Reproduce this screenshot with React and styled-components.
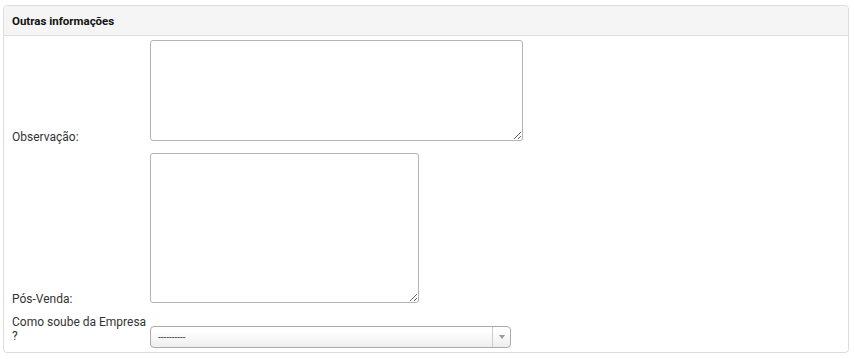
import React from 'react'
import styled, { createGlobalStyle } from 'styled-components'

const GlobalStyle = createGlobalStyle`
	body {
		margin: 0;
		font-family: Roboto, 'Liberation Sans', Arial, sans-serif;
		color: #333;
		background: #fff;
	}
`
const Panel = styled.section`
	margin: 5px 5px 0 3px;
	border: 1px solid #ddd;
	border-radius: 4px;
	background: #fff;
`
const Header = styled.div`
	height: 29px;
	padding: 0 8px;
	display: flex;
	align-items: center;
	background: #f5f5f5;
	border-bottom: 1px solid #ddd;
	border-radius: 3px 3px 0 0;
	font-size: 11.5px;
	font-weight: bold;
	color: #111;
`
const Body = styled.div`
	display: flex;
	flex-direction: column;
	gap: 12px;
	padding: 4px 8px 5px;
`
const Row = styled.div`
	display: flex;
	align-items: flex-end;
`
const Label = styled.label`
	width: 136px;
	flex: none;
	padding-right: 2px;
	font-size: 12px;
	line-height: 14px;
	margin-bottom: ${(p) => p.$drop || 0}px;
`
const TextArea = styled.textarea`
	display: block;
	box-sizing: border-box;
	width: ${(p) => p.$w}px;
	height: ${(p) => p.$h}px;
	margin: 0;
	border: 1px solid #b3b3b3;
	border-radius: 3px;
	font: inherit;
	font-size: 12px;
	resize: both;
	outline: none;
`
const Select = styled.div`
	box-sizing: border-box;
	width: 361px;
	height: 22px;
	margin-bottom: -1px;
	display: flex;
	align-items: stretch;
	border: 1px solid #aaa;
	border-radius: 4px;
	background: linear-gradient(#fff 20%, #eee 100%);
	font-size: 10px;
	color: #444;
`
const SelectValue = styled.span`
	flex: 1;
	display: flex;
	align-items: center;
	padding-left: 7px;
`
const Arrow = styled.span`
	width: 17px;
	display: flex;
	align-items: center;
	justify-content: center;
	border-left: 1px solid #ccc;

	&::after {
		content: '';
		border-left: 3px solid transparent;
		border-right: 3px solid transparent;
		border-top: 4px solid #999;
	}
`

export default function App() {
	return (
		<>
			<GlobalStyle />
			<Panel>
				<Header>Outras informações</Header>
				<Body>
					<Row>
						<Label $drop={-3}>Observação:</Label>
						<TextArea $w={373} $h={101} />
					</Row>
					<Row>
						<Label $drop={-3}>Pós-Venda:</Label>
						<TextArea $w={269} $h={150} />
					</Row>
					<Row>
						<Label $drop={4}>Como soube da Empresa ?</Label>
						<Select>
							<SelectValue>----------</SelectValue>
							<Arrow />
						</Select>
					</Row>
				</Body>
			</Panel>
		</>
	)
}
